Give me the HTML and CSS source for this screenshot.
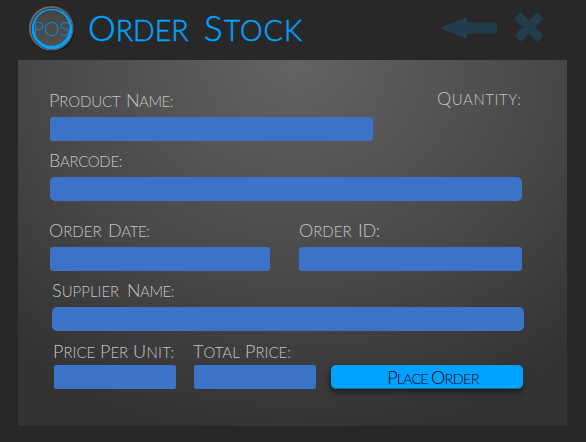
FILE: index.html
```html
<!DOCTYPE html>
<html lang="en">
<head>
<meta charset="utf-8">
<title>Order Stock</title>
<link rel="stylesheet" href="styles.css">
</head>
<body>
<header class="header">
  <svg class="logo" width="50" height="50" viewBox="0 0 50 50">
    <defs>
      <linearGradient id="disc" x1="0" y1="0" x2="0" y2="1"><stop offset="0" stop-color="#444"/><stop offset="1" stop-color="#505050"/></linearGradient>
    </defs>
    <circle cx="26" cy="26.2" r="22.6" fill="#161616"/>
    <circle cx="25.3" cy="25.3" r="22.3" fill="#696969"/>
    <circle cx="25.7" cy="25.8" r="20.8" fill="#303438"/>
    <circle cx="26" cy="26" r="20.3" fill="#00a2ff"/>
    <circle cx="25.7" cy="25" r="17.8" fill="url(#disc)"/>
    <text class="logo-text" x="7" y="33" textLength="37">POS</text>
  </svg>
  <h1 class="title"><span class="word t-order">Order</span><span class="word t-stock">Stock</span></h1>
  <svg class="back" width="58" height="24" viewBox="0 0 58 24"><path d="M0 12 27 1V6.5H57V17.5H27V23Z" fill="#223d4c"/></svg>
  <svg class="close" width="30" height="30" viewBox="0 0 30 30"><path d="M3.5 3.5 26.5 26.5M26.5 3.5 3.5 26.5" stroke="#223d4c" stroke-width="9" fill="none"/></svg>
</header>
<main class="panel">
  <div class="row first">
    <label class="field product"><span class="label"><span class="word w-product">Product</span><span class="word w-name">Name:</span></span><span class="input"></span></label>
    <span class="label quantity"><span class="word w-quantity">Quantity:</span></span>
  </div>
  <div class="row second">
    <label class="field wide"><span class="label"><span class="word w-barcode">Barcode:</span></span><span class="input round"></span></label>
  </div>
  <div class="row third">
    <label class="field date"><span class="label"><span class="word w-order">Order</span><span class="word w-date">Date:</span></span><span class="input"></span></label>
    <label class="field id"><span class="label"><span class="word w-order">Order</span><span class="word w-id">ID:</span></span><span class="input"></span></label>
  </div>
  <div class="row fourth">
    <label class="field wide"><span class="label"><span class="word w-supplier">Supplier</span><span class="word w-name">Name:</span></span><span class="input round"></span></label>
  </div>
  <div class="row fifth">
    <label class="field price"><span class="label"><span class="word w-price">Price</span><span class="word w-per">Per</span><span class="word w-unit">Unit:</span></span><span class="input square"></span></label>
    <label class="field price"><span class="label"><span class="word w-total">Total</span><span class="word w-price2">Price:</span></span><span class="input square"></span></label>
    <button class="place"><span class="word w-place">Place</span><span class="word w-order2">Order</span></button>
  </div>
</main>
</body>
</html>
```
FILE: styles.css
```css
* { box-sizing: border-box; }
body {
  margin: 0;
  width: 586px;
  height: 442px;
  overflow: hidden;
  background: #282828;
  font-family: Lato, "Liberation Sans", sans-serif;
  font-weight: 300;
}
.header { display: flex; align-items: flex-start; height: 60px; padding-left: 26px; }
.logo { margin-top: 3px; flex: none; }
.logo-text { font-size: 20px; font-weight: 300; fill: #1486c9; }
.title {
  display: flex;
  flex: none;
  width: 364px;
  margin: 0;
  padding: 6px 0 0 12px;
  font-size: 28.5px;
  font-weight: 300;
  line-height: 42px;
  color: #00a2ff;
  -webkit-text-stroke: 0.5px #00a2ff;
}
.word { display: block; flex: none; text-transform: uppercase; white-space: nowrap; }
.title .word::first-letter { font-size: 35px; }
.back { flex: none; margin: 16px 0 0 0; }
.close { flex: none; margin: 12px 0 0 15.5px; }
.t-order { width: 116px; }
.t-stock { letter-spacing: 1px; }

.panel {
  width: 549px;
  height: 366px;
  margin-left: 18px;
  padding: 29px 0 0 31px;
  background: radial-gradient(ellipse 430px 375px at 277px 0, #636363, #4a4a4a 55%, #333);
}
.row { display: flex; height: 60px; }
.second { height: 70px; }
.fourth { padding-left: 2px; }
.fifth { height: 62px; margin-top: -1px; padding-left: 4px; }
.label {
  display: flex;
  height: 28px;
  font-size: 15px;
  line-height: 22px;
  color: #c4c4c4;
}
.label .word::first-letter, .place .word::first-letter { font-size: 18px; }
.input { display: block; height: 24px; margin-left: 1px; border-radius: 3px; background: #3b73c8; }
.round { border-radius: 5px; }
.square { border-radius: 2px; }
.product { width: 324px; margin-right: 64px; }
.quantity { margin-top: -2px; }
.wide { width: 472.5px; }
.date { width: 221px; margin-right: 28px; }
.id { width: 224px; }
.id .label, .fourth .label { padding-left: 1px; }
.price { width: 122.5px; margin-right: 17.5px; padding-top: 1px; }
.price .label { height: 26px; line-height: 24px; }
.place {
  display: flex;
  width: 192px;
  height: 24px;
  margin: 27px 0 0 -2px;
  padding: 0 0 0 53px;
  border: 0;
  border-bottom: 1px solid #176da3;
  border-radius: 5px;
  background: #00a2ff;
  box-shadow: -1px 3px 6px #0008;
  font: 300 14.5px/25px Lato, "Liberation Sans", sans-serif;
  color: #000;
}
.w-product { width: 77px; letter-spacing: -0.15px; }
.w-name { letter-spacing: -0.5px; }
.w-barcode { letter-spacing: -0.35px; }
.w-quantity { letter-spacing: 0.55px; }
.w-order { width: 59px; }
.w-date { letter-spacing: -0.4px; }
.label .w-id { font-size: 18px; letter-spacing: -0.3px; }
.w-supplier { width: 75px; }
.w-price { width: 47px; }
.w-per { width: 33px; }
.w-unit { letter-spacing: 0.35px; }
.w-total { width: 52px; }
.w-place { width: 47px; letter-spacing: -0.9px; }
.w-order2 { letter-spacing: -0.7px; }
```
